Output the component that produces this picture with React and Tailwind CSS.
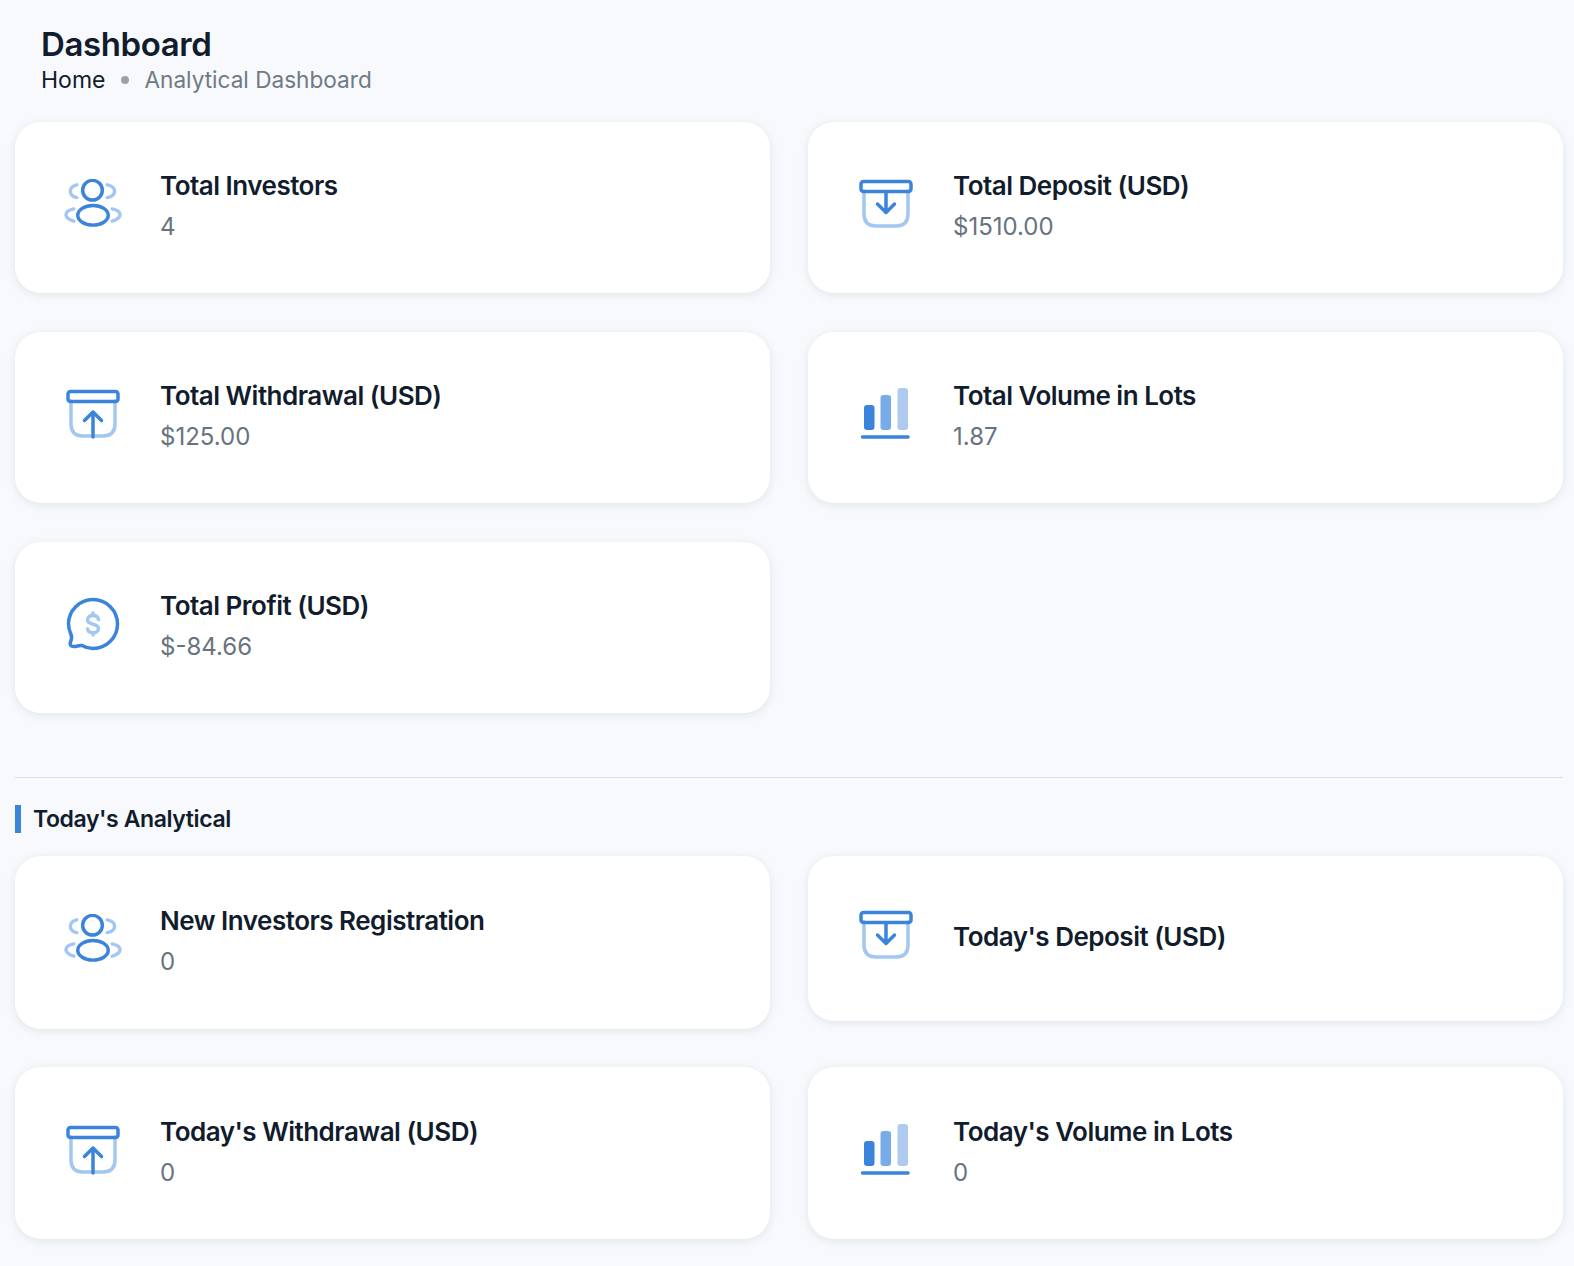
const font = { fontFamily: '"Inter", "Open Sans", sans-serif' }

function UsersIcon() {
  return (
    <svg width="60" height="50" viewBox="0 0 60 50" fill="none" strokeWidth="3.5" strokeLinecap="round" stroke="#3a84dc" className="mr-[1px]">
      <circle cx="30" cy="11" r="10" />
      <ellipse cx="30.500" cy="36.500" rx="15.500" ry="10" />
      <g stroke="#a3c7f0">
        <path d="M14 5.500C9.500 6.500 7.500 9 7.500 12C7.500 15 9.500 17.500 14 18.500" />
        <path d="M45 5.500C50 6.500 52.500 9 52.500 12C52.500 15 50 17.500 45 18.500" />
        <path d="M11 30C6 31 3 33.500 3 36C3 38.500 6 41 11 42.500" />
        <path d="M50 30C55 31 58 33.500 58 36C58 38.500 55 41 50 42.500" />
      </g>
    </svg>
  )
}

function BoxIcon({ up }) {
  return (
    <svg width="54" height="50" viewBox="0 0 54 50" fill="none" strokeWidth="3.5" strokeLinecap="round" strokeLinejoin="round" stroke="#3a84dc" className="mr-[1px]">
      <path d="M5 12V35C5 43 9 47 17 47H37C45 47 49 43 49 35V12" stroke="#a3c7f0" />
      <rect x="2" y="2.500" width="50" height="10" rx="2.500" />
      {up ? (
        <path d="M27 48V23M18.500 31.500L27 23L35.500 31.500" />
      ) : (
        <path d="M27 13V33M18.500 25L27 33.500L35.500 25" />
      )}
    </svg>
  )
}

function BarsIcon() {
  return (
    <svg width="50" height="54" viewBox="0 0 50 54" fill="none">
      <rect x="3" y="18" width="10.500" height="25" rx="3" fill="#3a84dc" />
      <rect x="19.500" y="8" width="10.500" height="35" rx="3" fill="#78ace8" />
      <rect x="36.500" y="1" width="10.500" height="42" rx="3" fill="#aecbef" />
      <path d="M1.500 50H47" stroke="#3a84dc" strokeWidth="3.500" strokeLinecap="round" />
    </svg>
  )
}

function ProfitIcon() {
  return (
    <svg width="54" height="54" viewBox="0 0 54 54" fill="none" className="mr-[1px]">
      <path
        d="M27 2.500C13.500 2.500 2.500 13.500 2.500 27C2.500 31 3.500 34 5 37.500C6 40 6 42 4.500 45C3.500 47.500 4.500 49.500 8 49.500C11 49.500 13 48 16 48.500C19.500 50.500 23 51.500 27 51.500C40.500 51.500 51.500 40.500 51.500 27C51.500 13.500 40.500 2.500 27 2.500Z"
        stroke="#3a84dc"
        strokeWidth="3.500"
        strokeLinejoin="round"
      />
      <path
        d="M32.500 22.500C32 20 30 18.500 27 18.500C24 18.500 21.500 20 21.500 22.800C21.500 25.500 24 26.500 27 27.200C30 28 32.500 29 32.500 31.500C32.500 34 30 35.800 27 35.800C24 35.800 22 34.300 21.500 32M27 16V18.500M27 35.800V38"
        stroke="#a3c7f0"
        strokeWidth="3.500"
        strokeLinecap="round"
      />
    </svg>
  )
}

function StatCard({ icon, label, value, height = 'h-[171px]' }) {
  return (
    <div className={`${height} bg-white rounded-[26px] shadow-[0_2px_8px_rgba(145,158,171,0.22)] flex items-center pl-[48px]`}>
      <div className="w-[60px] flex justify-center shrink-0 mb-[7px]">{icon}</div>
      <div className="ml-[37px] mb-[4px]">
        <h3 className="text-[26px] leading-[43px] font-semibold text-[#111c2d] tracking-[-0.5px]">{label}</h3>
        {value !== undefined && <p className="text-[24px] leading-[40px] text-[#68737f]">{value}</p>}
      </div>
    </div>
  )
}

export default function App() {
  return (
    <div style={font} className="min-h-[1266px] bg-[#f7f9fc] pl-[15px] pr-[11px] pt-[22px] overflow-hidden">
      <div className="pl-[26px]">
        <h1 className="text-[33px] leading-[44px] font-semibold text-[#111c2d] tracking-[-0.4px]">Dashboard</h1>
        <div className="flex items-center text-[22.6px] leading-[28px]">
          <span className="text-[23px] text-[#111c2d]">Home</span>
          <span className="w-[8px] h-[8px] rounded-full bg-[#99a2ab] ml-[16px] mr-[15px]" />
          <span className="text-[#707a85]">Analytical Dashboard</span>
        </div>
      </div>

      <div className="grid grid-cols-2 gap-x-[38px] gap-y-[39px] mt-[28px]">
        <StatCard icon={<UsersIcon />} label="Total Investors" value="4" />
        <StatCard icon={<BoxIcon />} label="Total Deposit (USD)" value="$1510.00" />
        <StatCard icon={<BoxIcon up />} label="Total Withdrawal (USD)" value="$125.00" />
        <StatCard icon={<BarsIcon />} label="Total Volume in Lots" value="1.87" />
        <StatCard icon={<ProfitIcon />} label="Total Profit (USD)" value="$-84.66" />
      </div>

      <hr className="mt-[64px] border-[#dcdfe3]" />

      <div className="mt-[27px] flex items-center border-l-[6px] border-[#3a84dc] h-[28px] pl-[12px]">
        <h2 className="text-[23px] font-semibold text-[#111c2d] tracking-[-0.4px]">Today's Analytical</h2>
      </div>

      <div className="grid grid-cols-2 gap-x-[38px] gap-y-[38px] mt-[23px] items-start">
        <StatCard icon={<UsersIcon />} label="New Investors Registration" value="0" height="h-[173px]" />
        <StatCard icon={<BoxIcon />} label="Today's Deposit (USD)" height="h-[165px]" />
        <StatCard icon={<BoxIcon up />} label="Today's Withdrawal (USD)" value="0" height="h-[172px]" />
        <StatCard icon={<BarsIcon />} label="Today's Volume in Lots" value="0" height="h-[172px]" />
      </div>
    </div>
  )
}
